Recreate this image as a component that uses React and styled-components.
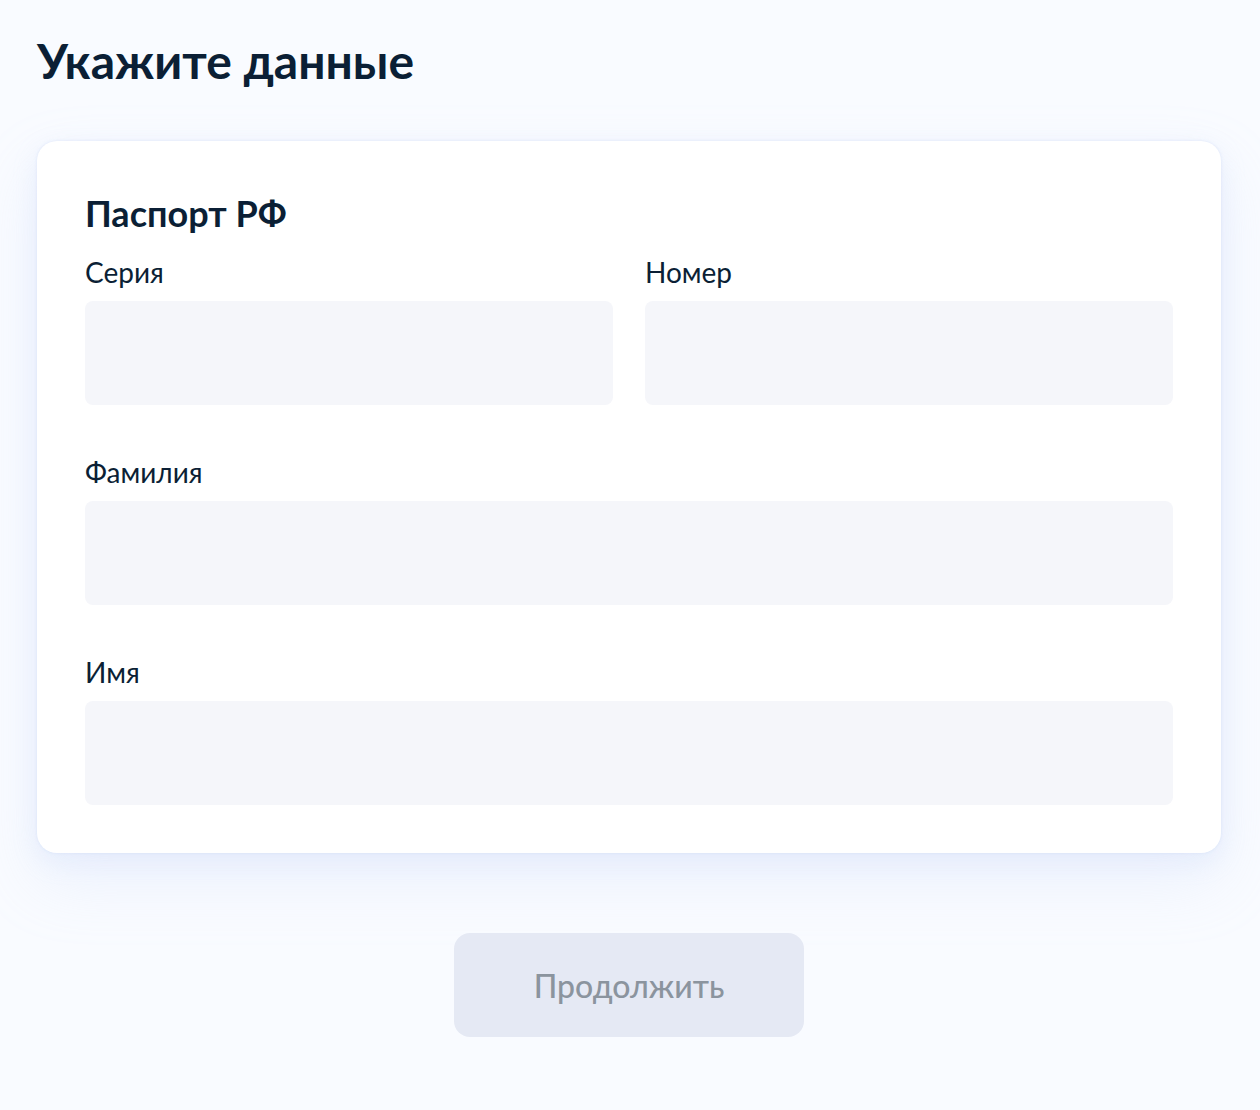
import React from "react";
import styled, { createGlobalStyle } from "styled-components";

const Global = createGlobalStyle`
  html, body { margin: 0; padding: 0; background: #f9fbff; }
  body { font-family: Lato, "Noto Sans", sans-serif; color: #0b1f35; }
  * { box-sizing: border-box; }
`;

const Page = styled.div`
  padding: 29px 39px 60px 37px;
  display: flex;
  flex-direction: column;
`;

const Heading = styled.h1`
  margin: 0;
  font-size: 48px;
  line-height: 64px;
  font-weight: 700;
  color: #0b1f35;
`;

const Card = styled.section`
  margin-top: 48px;
  background: #ffffff;
  border-radius: 20px;
  padding: 48px;
  box-shadow: 0 0 3px rgba(200, 215, 245, 0.55), 0 8px 24px rgba(190, 208, 245, 0.22),
    0 28px 64px rgba(190, 208, 245, 0.22);
  display: flex;
  flex-direction: column;
`;

const CardTitle = styled.h2`
  margin: 2px 0 21px;
  font-size: 36px;
  line-height: 44px;
  font-weight: 700;
  color: #0b1f35;
`;

const Grid = styled.div`
  display: grid;
  grid-template-columns: ${(p) => (p.$cols === 2 ? "1fr 1fr" : "1fr")};
  column-gap: 32px;
  margin-top: ${(p) => (p.$first ? "0" : "51px")};
`;

const Field = styled.label`
  display: flex;
  flex-direction: column;
  gap: 13px;
`;

const Label = styled.span`
  font-size: 28px;
  line-height: 32px;
  color: #0b1f35;
`;

const Input = styled.input`
  height: 104px;
  border: none;
  border-radius: 8px;
  background: #f5f6fa;
  outline: none;
  padding: 0 24px;
  font-family: inherit;
  font-size: 28px;
  color: #0b1f35;
`;

const ButtonRow = styled.div`
  display: flex;
  justify-content: center;
  margin-top: 80px;
`;

const Button = styled.button`
  width: 350px;
  height: 104px;
  border: none;
  border-radius: 16px;
  background: #e5e9f4;
  color: #8b949e;
  font-family: inherit;
  font-size: 32px;
  font-weight: 500;
  cursor: default;
`;

export default function App() {
  return (
    <>
      <Global />
      <Page>
        <Heading>Укажите данные</Heading>
        <Card>
          <CardTitle>Паспорт РФ</CardTitle>
          <Grid $cols={2} $first>
            <Field>
              <Label>Серия</Label>
              <Input />
            </Field>
            <Field>
              <Label>Номер</Label>
              <Input />
            </Field>
          </Grid>
          <Grid>
            <Field>
              <Label>Фамилия</Label>
              <Input />
            </Field>
          </Grid>
          <Grid>
            <Field>
              <Label>Имя</Label>
              <Input />
            </Field>
          </Grid>
        </Card>
        <ButtonRow>
          <Button disabled>Продолжить</Button>
        </ButtonRow>
      </Page>
    </>
  );
}
